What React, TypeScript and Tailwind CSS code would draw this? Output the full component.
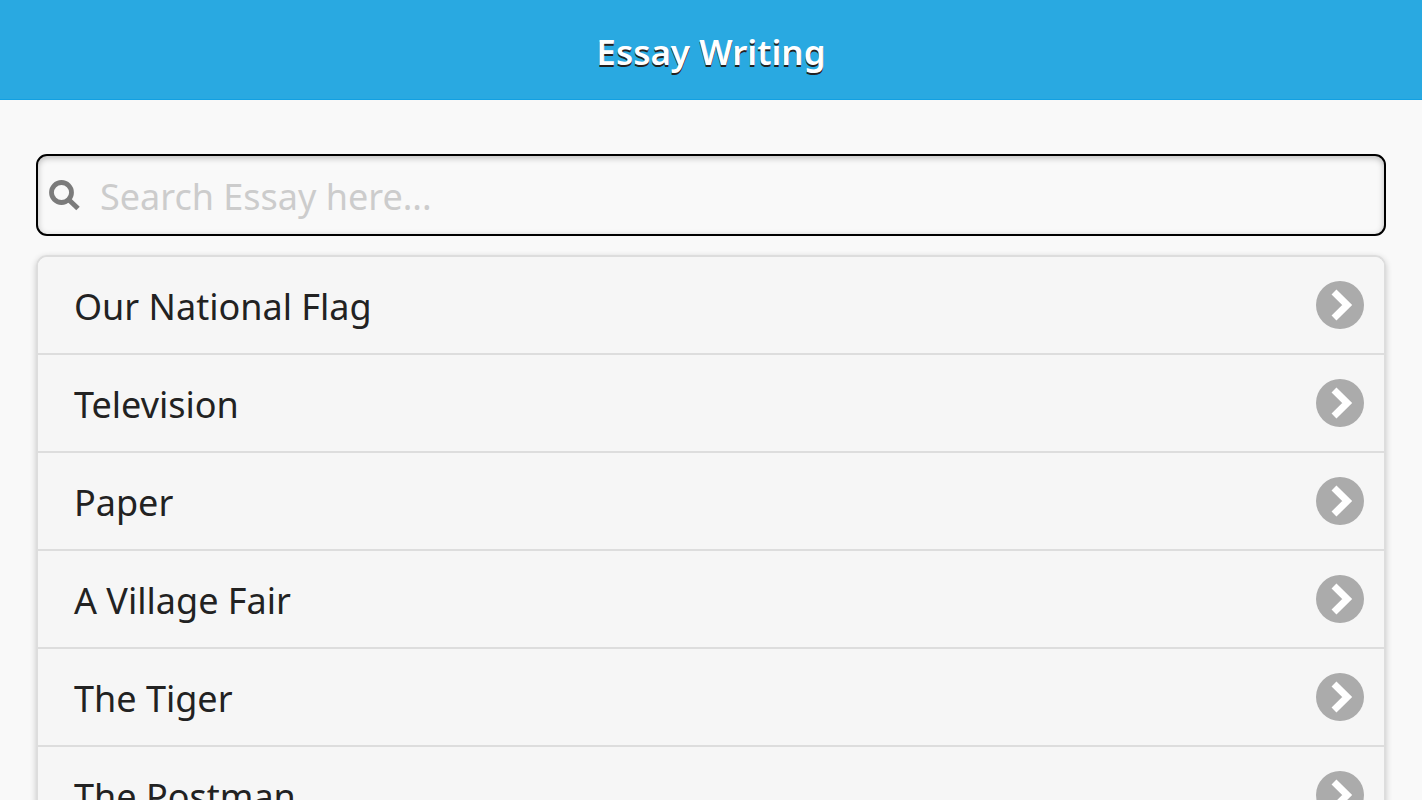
import { useState } from "react";

type Essay = {
    id: number;
    title: string;
};

const essays: Essay[] = [
    { id: 1, title: "Our National Flag" },
    { id: 2, title: "Television" },
    { id: 3, title: "Paper" },
    { id: 4, title: "A Village Fair" },
    { id: 5, title: "The Tiger" },
    { id: 6, title: "The Postman" },
];

function SearchIcon() {
    return (
        <svg viewBox="0 0 32 32" className="h-8 w-8 shrink-0" fill="none" stroke="#7b7b7b" aria-hidden="true">
            <circle cx="13.5" cy="13.5" r="10" strokeWidth="4.8" />
            <path d="M20 20L30 29.5" strokeWidth="5" />
        </svg>
    );
}

function ArrowIcon() {
    return (
        <svg viewBox="0 0 48 48" className="h-12 w-12 shrink-0" aria-hidden="true">
            <circle cx="24" cy="24" r="24" fill="#ababab" />
            <path d="M18 11L31.2 24L18 37" fill="none" stroke="#fff" strokeWidth="7" />
        </svg>
    );
}

function EssayRow({ essay }: { essay: Essay }) {
    return (
        <li className="border-t-2 border-[#dddddd] first:border-t-0">
            <a
                href={`#essay-${essay.id}`}
                className="flex items-center justify-between bg-[#f6f6f6] py-6 pr-5 pl-9 text-[36px] leading-[44px] text-[#222222]"
            >
                <span className="pt-1">{essay.title}</span>
                <ArrowIcon />
            </a>
        </li>
    );
}

export default function App() {
    const [search, setSearch] = useState("");

    // Filter on the title, ignoring case
    const filteredEssays = essays.filter((essay) =>
        essay.title.toLowerCase().includes(search.trim().toLowerCase())
    );

    return (
        <div className="min-h-screen bg-[#f9f9f9] font-['Noto_Sans',sans-serif]">
            <header className="border-b border-[#12a0e2] bg-[#29a9e1] pt-[30px] pb-[25px] text-center">
                <h1 className="text-[35px] leading-[44px] font-semibold text-white [text-shadow:0_2px_0_#222]">
                    Essay Writing
                </h1>
            </header>

            <main className="px-9 pt-[54px]">
                <label className="flex items-center gap-5 rounded-[11px] border-2 border-black bg-[#f9f9f9] px-[10px] py-[13px] shadow-[inset_0_2px_6px_rgba(0,0,0,0.25)]">
                    <SearchIcon />
                    <input
                        type="text"
                        value={search}
                        onChange={(e) => setSearch(e.target.value)}
                        placeholder="Search Essay here..."
                        aria-label="Search Essay"
                        className="h-[52px] min-w-0 flex-1 bg-transparent pt-[2px] text-[36px] leading-[50px] text-[#222222] outline-none placeholder:text-[#cccccc]"
                    />
                </label>

                <ul className="mt-[19px] overflow-hidden rounded-[11px] border-2 border-[#dddddd] shadow-[0_2px_6px_rgba(0,0,0,0.2)]">
                    {filteredEssays.map((essay) => (
                        <EssayRow key={essay.id} essay={essay} />
                    ))}
                </ul>
            </main>
        </div>
    );
}
